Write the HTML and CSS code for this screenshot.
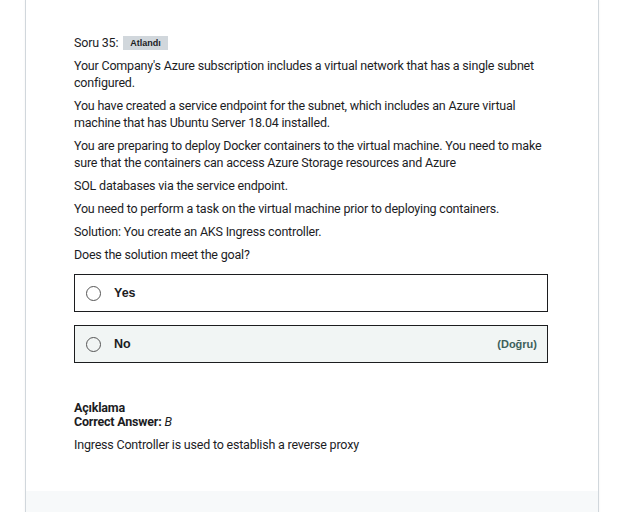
FILE: index.html
```html
<!DOCTYPE html>
<html lang="tr">
<head>
<meta charset="utf-8">
<link rel="stylesheet" href="styles.css">
</head>
<body>
<div class="page">
  <div class="card">
    <div class="content">
      <div class="qhead">Soru 35: <span class="badge">Atlandı</span></div>
      <p>Your Company's Azure subscription includes a virtual network that has a single subnet configured.</p>
      <p>You have created a service endpoint for the subnet, which includes an Azure virtual machine that has Ubuntu Server 18.04 installed.</p>
      <p>You are preparing to deploy Docker containers to the virtual machine. You need to make sure that the containers can access Azure Storage resources and Azure</p>
      <p>SOL databases via the service endpoint.</p>
      <p>You need to perform a task on the virtual machine prior to deploying containers.</p>
      <p>Solution: You create an AKS Ingress controller.</p>
      <p>Does the solution meet the goal?</p>
      <div class="answers">
        <div class="answer"><span class="radio"></span><span class="label">Yes</span></div>
        <div class="answer correct"><span class="radio"></span><span class="label">No</span><span class="tag">(Doğru)</span></div>
      </div>
      <div class="explain">
        <div class="ehead">Açıklama</div>
        <div class="ehead">Correct Answer: <i>B</i></div>
        <p class="etext">Ingress Controller is used to establish a reverse proxy</p>
      </div>
    </div>
    <div class="footer"></div>
  </div>
</div>
</body>
</html>
```
FILE: styles.css
```css
html, body { margin: 0; padding: 0; background: #fff; }
body { font-family: Roboto, "Liberation Sans", sans-serif; color: #1c1d1f; font-size: 12.5px; letter-spacing: -0.2px; }
.page { padding: 0 26px 0 25px; }
.card {
  border: 1px solid #d1d7dc;
  border-top: none;
  box-shadow: 0 0 2px rgba(0,0,0,0.06);
  background: #fff;
}
.content { padding: 34px 50px 0 48px; }
.qhead { line-height: 17px; display: flex; align-items: center; gap: 5px; margin-bottom: 6px; }
.badge {
  background: #d1d7dc; font-size: 9px; font-weight: bold; padding: 0 7px;
  line-height: 14px; letter-spacing: 0; font-family: "Liberation Sans", Arial, sans-serif;
}
p { margin: 0 0 6px; line-height: 17px; }
.answers { margin-top: 11px; display: flex; flex-direction: column; gap: 13px; }
.answer {
  height: 36px; border: 1px solid #1c1d1f; display: flex; align-items: center;
  padding: 0 10px 0 11px;
}
.answer.correct { background: #f1f5f4; }
.radio {
  border: 1px solid #555; border-radius: 50%;
  margin-right: 13px; box-sizing: border-box; width: 15px; height: 15px;
}
.label { font-weight: bold; font-size: 12.5px; letter-spacing: 0; font-family: "Liberation Sans", Arial, sans-serif; }
.tag { margin-left: auto; font-size: 11px; font-weight: bold; letter-spacing: 0; font-family: "Liberation Sans", Arial, sans-serif; color: #3d5f5b; }
.explain { margin-top: 38px; padding-bottom: 32px; }
.ehead { font-weight: bold; line-height: 14px; }
.ehead i { font-weight: normal; }
.etext { margin-top: 7px; }
.footer { height: 40px; background: #f7f9fa; }
```
